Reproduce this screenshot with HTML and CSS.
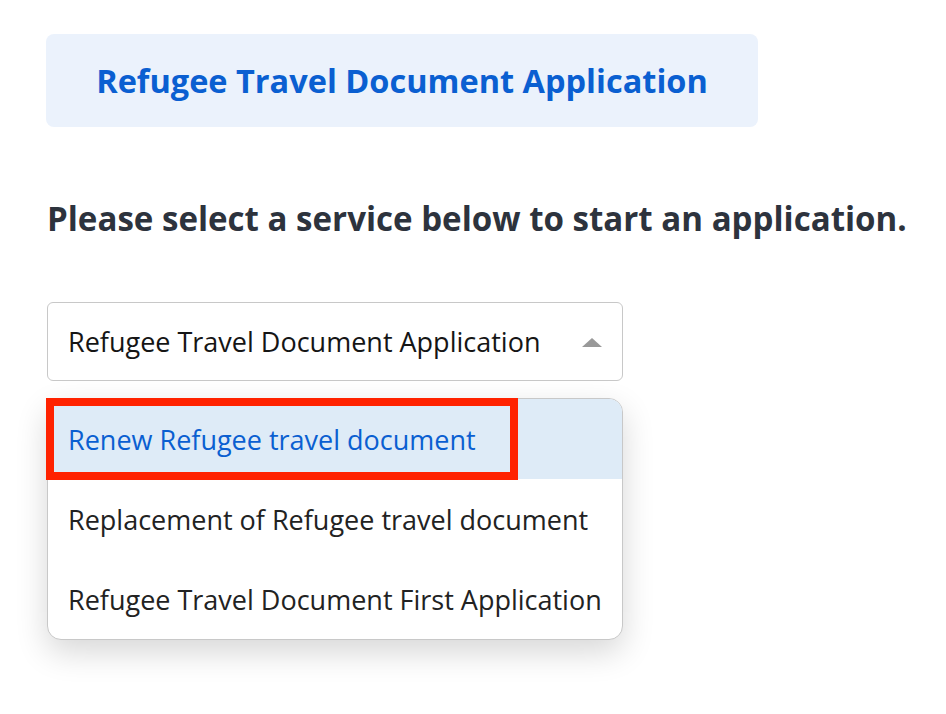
FILE: index.html
```html
<!DOCTYPE html>
<html>
<head>
<meta charset="utf-8">
<link rel="stylesheet" href="styles.css">
</head>
<body>
<div class="page">
  <div class="banner">Refugee Travel Document Application</div>
  <h2 class="prompt">Please select a service below to start an application.</h2>
  <div class="select-wrap">
    <div class="select">
      <span class="select-value">Refugee Travel Document Application</span>
      <span class="caret"></span>
    </div>
    <ul class="menu">
      <li class="option active"><span class="option-text">Renew Refugee travel document</span><span class="highlight"></span></li>
      <li class="option"><span class="option-text">Replacement of Refugee travel document</span></li>
      <li class="option"><span class="option-text">Refugee Travel Document First Application</span></li>
    </ul>
  </div>
</div>
</body>
</html>
```
FILE: styles.css
```css
* { box-sizing: border-box; }
html, body { margin: 0; padding: 0; background: #fff; }
body { font-family: "Open Sans", Lato, sans-serif; min-height: 714px; }
.page {
  padding: 34px 0 60px 46px;
  display: flex;
  flex-direction: column;
  align-items: flex-start;
}
.banner {
  width: 712px;
  height: 93px;
  background: #ebf2fc;
  border-radius: 8px;
  color: #0a5fd1;
  font-weight: 700;
  font-size: 32.5px;
  display: flex;
  align-items: center;
  justify-content: center;
}
.prompt {
  margin: 72px 0 0 1px;
  font-size: 33.1px;
  font-weight: 700;
  color: #2d333d;
  line-height: 40px;
  white-space: nowrap;
}
.select-wrap {
  margin-top: 63px;
  margin-left: 1px;
  width: 576px;
  display: flex;
  flex-direction: column;
  gap: 17px;
}
.select {
  height: 79px;
  border: 1px solid #c8c8c8;
  border-radius: 6px;
  display: flex;
  align-items: center;
  justify-content: space-between;
  padding: 0 20px 0 20px;
  font-size: 27px;
  color: #151515;
}
.caret {
  width: 0; height: 0;
  border-left: 10px solid transparent;
  border-right: 10px solid transparent;
  border-bottom: 9px solid #999;
  margin-top: 2px;
}
.menu {
  list-style: none;
  margin: 0;
  padding: 0;
  border: 1px solid #c8c8c8;
  border-radius: 14px;
  box-shadow: 0 12px 32px rgba(0,0,0,0.16);
  background: #fff;
}
.option {
  position: relative;
  height: 80px;
  display: flex;
  align-items: center;
  padding-left: 20px;
  font-size: 27px;
  color: #222;
}
.option.active {
  background: #deebf7;
  color: #0a5fd1;
  border-radius: 13px 13px 0 0;
}
.highlight {
  position: absolute;
  left: -2px;
  top: -1px;
  width: 472px;
  height: 82px;
  border: 8px solid #ff2200;
}
```
